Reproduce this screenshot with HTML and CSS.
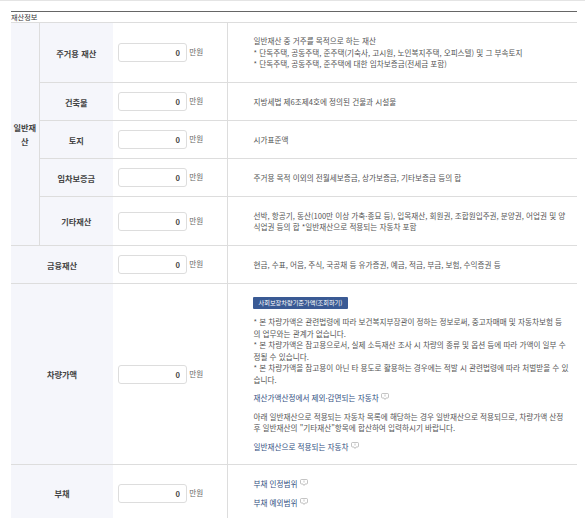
FILE: index.html
```html
<!DOCTYPE html>
<html lang="ko">
<head>
  <meta charset="UTF-8">
  <meta name="viewport" content="width=device-width, initial-scale=1.0">
  <title>재산정보</title>
  <link rel="stylesheet" href="styles.css">
</head>
<body>
  <div class="top-rule"></div>
  <section class="asset-form">
    <h2 class="caption">재산정보</h2>
    <table class="asset-table">
      <colgroup>
        <col class="col-group">
        <col class="col-name">
        <col class="col-input">
        <col>
      </colgroup>
      <tbody>
        <tr class="row-60">
          <th class="group" rowspan="5">일반재산</th>
          <th>주거용 재산</th>
          <td class="amount"><input class="money" type="text" value="0"> <span class="unit">만원</span></td>
          <td class="desc">일반재산 중 거주를 목적으로 하는 재산<br>* 단독주택, 공동주택, 준주택(기숙사, 고시원, 노인복지주택, 오피스텔) 및 그 부속토지<br>* 단독주택, 공동주택, 준주택에 대한 임차보증금(전세금 포함)</td>
        </tr>
        <tr class="row-38">
          <th>건축물</th>
          <td class="amount"><input class="money" type="text" value="0"> <span class="unit">만원</span></td>
          <td class="desc">지방세법 제6조제4호에 정의된 건물과 시설물</td>
        </tr>
        <tr class="row-38">
          <th>토지</th>
          <td class="amount"><input class="money" type="text" value="0"> <span class="unit">만원</span></td>
          <td class="desc">시가표준액</td>
        </tr>
        <tr class="row-38">
          <th>임차보증금</th>
          <td class="amount"><input class="money" type="text" value="0"> <span class="unit">만원</span></td>
          <td class="desc">주거용 목적 이외의 전월세보증금, 상가보증금, 기타보증금 등의 합</td>
        </tr>
        <tr class="row-49">
          <th>기타재산</th>
          <td class="amount"><input class="money" type="text" value="0"> <span class="unit">만원</span></td>
          <td class="desc">선박, 항공기, 동산(100만 이상 가축·종묘 등), 입목재산, 회원권, 조합원입주권, 분양권, 어업권 및 양식업권 등의 합 *일반재산으로 적용되는 자동차 포함</td>
        </tr>
        <tr class="row-38">
          <th colspan="2">금융재산</th>
          <td class="amount"><input class="money" type="text" value="0"> <span class="unit">만원</span></td>
          <td class="desc">현금, 수표, 어음, 주식, 국공채 등 유가증권, 예금, 적금, 부금, 보험, 수익증권 등</td>
        </tr>
        <tr class="row-181">
          <th colspan="2">차량가액</th>
          <td class="amount"><input class="money" type="text" value="0"> <span class="unit">만원</span></td>
          <td class="desc">
            <a class="btn-lookup" href="#">사회보장차량기준가액(조회하기)</a>
            <p>* 본 차량가액은 관련법령에 따라 보건복지부장관이 정하는 정보로써, 중고자매매 및 자동차보험 등<br>의 업무와는 관계가 없습니다.<br>* 본 차량가액은 참고용으로서, 실제 소득재산 조사 시 차량의 종류 및 옵션 등에 따라 가액이 일부 수정될 수 있습니다.<br>* 본 차량가액을 참고용이 아닌 타 용도로 활용하는 경우에는 적발 시 관련법령에 따라 처벌받을 수 있습니다.</p>
            <p><a class="help" href="#">재산가액산정에서 제외·감면되는 자동차<svg class="help-icon" viewBox="0 0 8 7"><path d="M1.5.5h5a1 1 0 0 1 1 1v2.5a1 1 0 0 1-1 1H5L4 6.5 3 5H1.5a1 1 0 0 1-1-1V1.500a1 1 0 0 1 1-1z"/><path d="M4 1.500v2"/></svg></a></p>
            <p>아래 일반재산으로 적용되는 자동차 목록에 해당하는 경우 일반재산으로 적용되므로, 차량가액 산정 후 일반재산의 "기타재산"항목에 합산하여 입력하시기 바랍니다.</p>
            <p><a class="help" href="#">일반재산으로 적용되는 자동차<svg class="help-icon" viewBox="0 0 8 7"><path d="M1.5.5h5a1 1 0 0 1 1 1v2.5a1 1 0 0 1-1 1H5L4 6.5 3 5H1.5a1 1 0 0 1-1-1V1.500a1 1 0 0 1 1-1z"/><path d="M4 1.500v2"/></svg></a></p>
          </td>
        </tr>
        <tr class="row-last">
          <th colspan="2">부채</th>
          <td class="amount"><input class="money" type="text" value="0"> <span class="unit">만원</span></td>
          <td class="desc">
            <p><a class="help" href="#">부채 인정범위<svg class="help-icon" viewBox="0 0 8 7"><path d="M1.5.5h5a1 1 0 0 1 1 1v2.5a1 1 0 0 1-1 1H5L4 6.5 3 5H1.5a1 1 0 0 1-1-1V1.500a1 1 0 0 1 1-1z"/><path d="M4 1.500v2"/></svg></a></p>
            <p><a class="help" href="#">부채 예외범위<svg class="help-icon" viewBox="0 0 8 7"><path d="M1.5.5h5a1 1 0 0 1 1 1v2.5a1 1 0 0 1-1 1H5L4 6.5 3 5H1.5a1 1 0 0 1-1-1V1.500a1 1 0 0 1 1-1z"/><path d="M4 1.500v2"/></svg></a></p>
          </td>
        </tr>
      </tbody>
    </table>
  </section>
</body>
</html>
```

FILE: styles.css
```css
html, body {
  height: 518px;
  overflow: hidden;
}

body {
  margin: 0;
  background-color: #fff;
  font-family: "Noto Sans CJK KR", "Noto Sans", sans-serif;
  font-size: 7.6px;
  color: #555;
}

.top-rule {
  height: 1px;
  background-color: #e4e4e4;
}

.asset-form {
  width: 566px;
  margin: 10px 0 0 11px;
  border-top: 1px solid #666;
}

.caption {
  margin: 0;
  height: 10px;
  font-size: 7.2px;
  font-weight: 400;
  line-height: 10px;
  color: #333;
}

.asset-table {
  width: 100%;
  table-layout: fixed;
  border-collapse: collapse;
  border-top: 1px solid #ddd;
}

.col-group { width: 28px; }
.col-name { width: 74px; }
.col-input { width: 114px; }

.asset-table th,
.asset-table td {
  padding: 0;
  border-bottom: 1px solid #ddd;
  vertical-align: middle;
}

.asset-table th {
  background-color: #f5f6fb;
  font-size: 8.2px;
  font-weight: 700;
  color: #444;
  text-align: center;
}

.asset-table .group {
  border-right: 1px solid #ddd;
  line-height: 14px;
}

.row-60 { height: 60px; }
.row-38 { height: 38px; }
.row-49 { height: 49px; }
.row-181 { height: 181px; }
.row-last { height: 57px; }

.row-last th,
.row-last td {
  border-bottom: 0;
}

.row-last .desc p {
  margin-bottom: 8px;
}

.row-last .desc p:last-child {
  margin-bottom: 0;
}

.amount {
  padding-left: 5px !important;
  white-space: nowrap;
  border-right: 1px solid #ddd;
}

.money {
  box-sizing: border-box;
  width: 69px;
  height: 19px;
  padding: 0 6px 0 5px;
  border: 1px solid #ddd;
  border-radius: 3px;
  background-color: #fff;
  font-family: inherit;
  font-size: 7.6px;
  font-weight: 700;
  color: #444;
  text-align: right;
  vertical-align: middle;
}

.unit {
  color: #666;
}

.desc {
  padding: 0 6px 0 26px !important;
  line-height: 11.5px;
}

.desc p {
  margin: 0 0 7px;
}

.desc p:last-child {
  margin-bottom: 0;
}

.btn-lookup {
  display: inline-block;
  height: 12px;
  margin: 1px 0 7px -1px;
  padding: 0 6px;
  border-radius: 1px;
  background-color: #3a5a94;
  font-size: 6.2px;
  line-height: 12px;
  color: #fff;
  text-decoration: none;
  vertical-align: top;
}

.help {
  color: #33507f;
  text-decoration: none;
}

.help-icon {
  width: 8px;
  height: 7px;
  margin-left: 2px;
  vertical-align: 1px;
  fill: none;
  stroke: #aaa;
  stroke-width: 0.7;
}
```
